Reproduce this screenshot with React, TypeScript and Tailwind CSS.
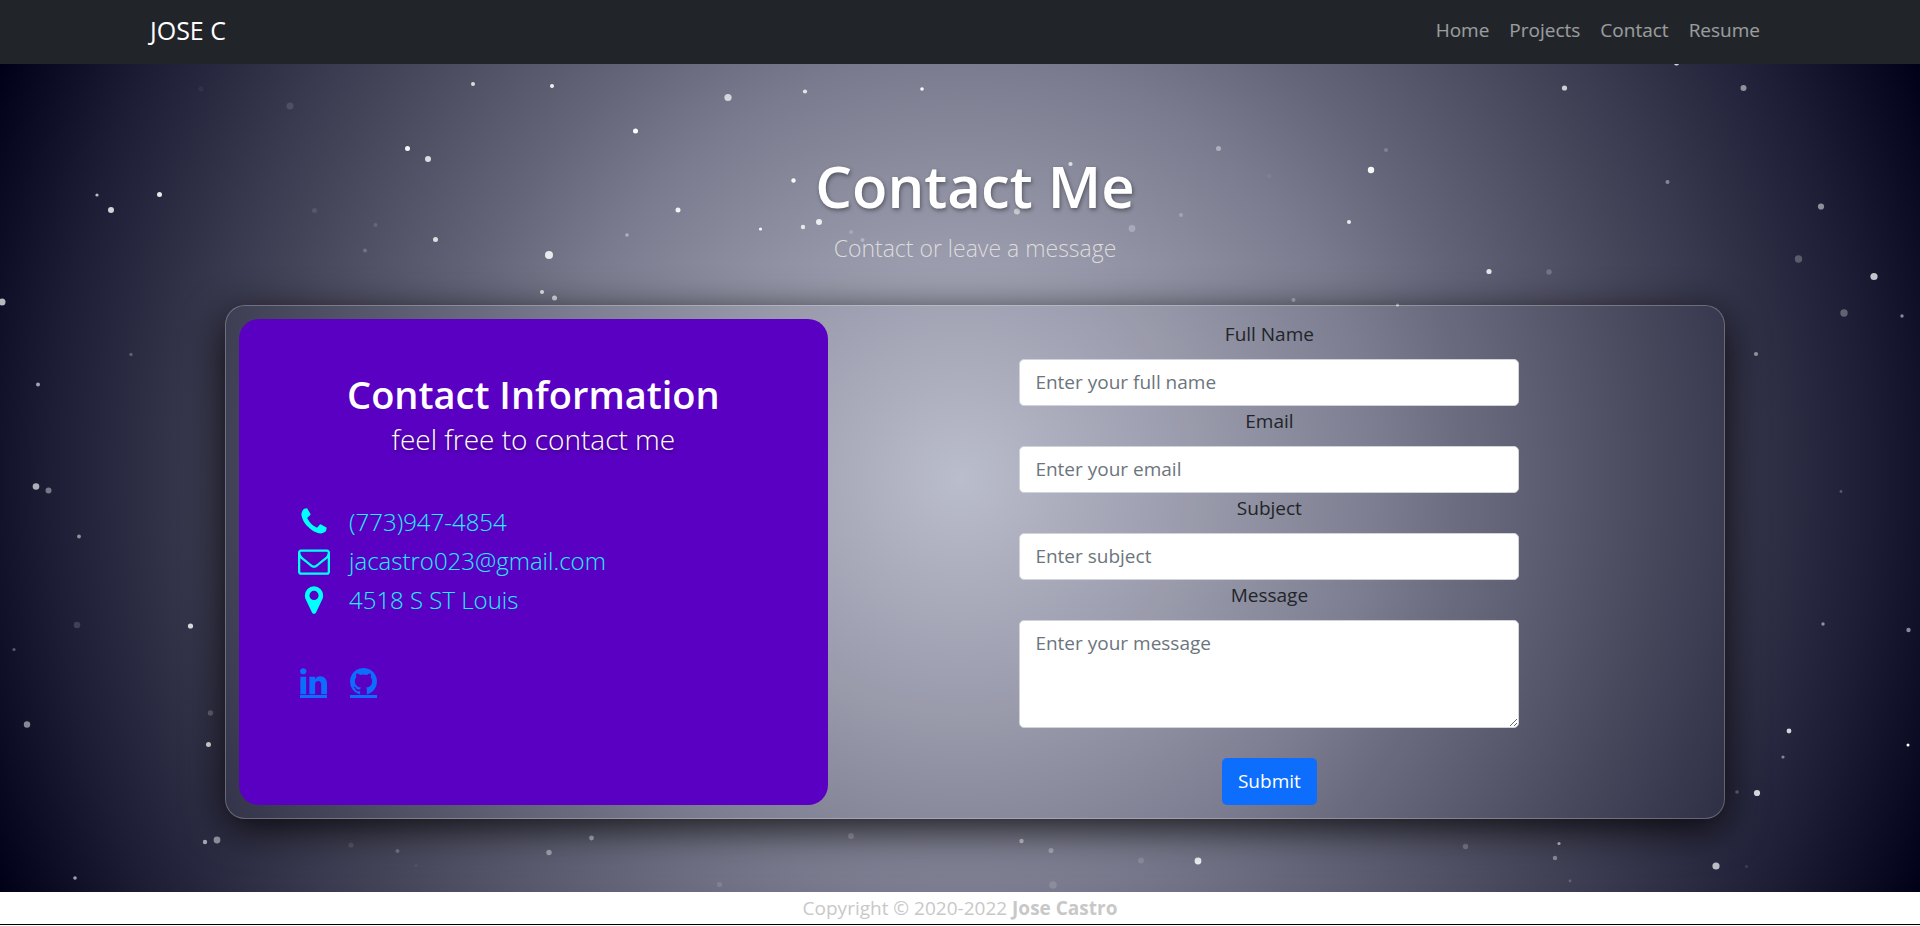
import React from "react";

type Star = [x: number, y: number, radius: number, opacity: number];

const stars: Star[] = [
  [473, 20, 2, 0.8], [552, 22, 2, 0.9], [201, 25, 2.5, 0.05], [290, 42, 3.5, 0.12], [635.5, 67, 2.5, 1],
  [407.5, 84.5, 2.5, 0.95], [428, 95, 3, 0.8], [97, 131, 1.6, 0.7], [159.5, 130.5, 2.5, 0.9], [111, 146, 3, 0.8],
  [314.5, 146.5, 2.5, 0.1], [375.5, 161, 2, 0.13], [435.5, 175.5, 2.5, 0.8], [365, 186.5, 2, 0.2], [627, 171, 1.8, 0.4],
  [549, 191, 4, 0.85], [542, 228, 2, 0.85], [554.5, 234, 2.5, 0.8], [2, 238, 3.5, 0.7],
  [728, 33.5, 3.6, 0.7], [805, 27.5, 2.1, 0.8], [922, 25, 1.8, 0.95], [793.5, 116.5, 2.2, 0.95], [678, 146, 2.5, 0.9],
  [760.5, 165, 1.6, 0.95], [803, 163, 2.2, 0.8], [819, 158, 3, 0.85], [851, 168, 2, 0.2], [862.5, 176, 2, 0.3],
  [1070.5, 100, 2.1, 0.7], [1017, 147.5, 3, 0.5], [1132, 164.5, 3.4, 0.25], [1181, 151, 2, 0.25], [1218.5, 84.5, 2.5, 0.4],
  [1269, 112, 2.5, 0.05],
  [1676.5, -1, 2.5, 0.8], [1564.5, 24, 2.6, 0.75], [1743.5, 24, 3, 0.5], [1386, 86, 2, 0.2], [1371, 106, 3.2, 0.95],
  [1349, 158, 2, 0.85], [1667.5, 118, 2, 0.4], [1821, 142.5, 3.1, 0.5], [1489, 207.5, 2.6, 0.85], [1549, 208, 2.7, 0.2],
  [1798.5, 195, 3.7, 0.25], [1874, 212.5, 3.6, 0.75], [1293.5, 236, 2, 0.4], [1397.5, 241, 1.6, 0.6],
  [131, 290.5, 1.7, 0.25], [38, 320.5, 2, 0.6], [36, 422.5, 3.3, 0.65], [48.5, 426.5, 3, 0.4], [79, 472.5, 1.9, 0.5],
  [1844, 249, 3.7, 0.3], [1902, 252, 1.7, 0.5], [1756, 290, 2.1, 0.5], [1841, 427.5, 1.4, 0.25],
  [77, 561, 3.3, 0.15], [190.5, 562, 2.6, 0.85], [14, 585.5, 1.6, 0.3], [27, 660.5, 3.2, 0.5], [210.5, 649, 2.7, 0.25],
  [208.5, 680.5, 2.5, 0.9], [205, 778, 2.2, 0.6], [217, 776, 3.4, 0.5], [351, 781, 2.6, 0.12], [397.5, 787, 2, 0.25],
  [416, 801.5, 1.6, 0.06], [549, 788.5, 2.7, 0.45], [591.5, 774, 2.4, 0.6], [75, 814, 1.8, 0.6],
  [851, 772, 2.9, 0.3], [1021.5, 777, 2.2, 0.65], [1051, 786.5, 2.5, 0.35], [1141, 796.5, 3, 0.15], [1198, 797, 3.4, 0.9],
  [719.5, 820.5, 2.6, 0.12], [1053, 821, 3.8, 0.13],
  [1823, 560, 1.7, 0.5], [1908.5, 566, 2.2, 0.5], [1789, 667, 2.4, 0.8], [1908, 681, 1.5, 1], [1783, 693, 1.6, 0.45],
  [1737, 728, 1.8, 0.3], [1757, 729, 3.1, 0.85], [1465.5, 782.5, 2.7, 0.25], [1559, 779.5, 1.6, 0.7], [1555, 794, 2.2, 0.4],
  [1570, 817, 1.4, 0.2], [1716, 802, 3.6, 0.7], [1746.5, 802.5, 1.6, 0.12],
];

const phonePath =
  "M1600 1240q0 27-10 70.5t-21 68.5q-21 50-122 106-94 51-186 51-27 0-53-3.5t-57.5-12.5-47-14.5-55.5-20.5-49-18q-98-35-175-83-127-79-264-216t-216-264q-48-77-83-175-3-9-18-49t-20.5-55.5-14.5-47-12.5-57.5-3.5-53q0-92 51-186 56-101 106-122 25-11 68.5-21t70.5-10q14 0 21 3 18 6 53 76 11 19 30 54t35 63.5 31 53.5q3 4 17.5 25t21.5 35.5 7 28.5q0 20-28.5 50t-62 55-62 53-28.5 46q0 9 5 22.5t8.5 20.5 14 24 11.5 19q76 137 174 235t235 174q2 1 19 11.5t24 14 20.5 8.5 22.5 5q18 0 46-28.5t53-62 55-62 50-28.5q14 0 28.5 7t35.5 21.5 25 17.5q25 15 53.5 31t63.5 35 54 30q70 35 76 53 3 7 3 21z";
const envelopePath =
  "M1664 1504v-768q-32 36-69 66-268 206-426 338-51 43-83 67t-86.5 48.5-102.5 24.5h-2q-48 0-102.5-24.5t-86.5-48.5-83-67q-158-132-426-338-37-30-69-66v768q0 13 9.5 22.5t22.5 9.5h1472q13 0 22.5-9.5t9.5-22.5zm0-1051v-24.5l-.5-13-3-12.5-5.5-9-9-7.5-14-2.5h-1472q-13 0-22.5 9.5t-9.5 22.5q0 168 147 284 193 152 401 317 6 5 35 29.5t46 37.5 44.5 31.5 50.5 27.5 43 9h2q20 0 43-9t50.5-27.5 44.5-31.5 46-37.5 35-29.5q208-165 401-317 54-43 100.5-115.5t46.5-131.5zm128-37v1088q0 66-47 113t-113 47h-1472q-66 0-113-47t-47-113v-1088q0-66 47-113t113-47h1472q66 0 113 47t47 113z";
const markerPath =
  "M1152 640q0-106-75-181t-181-75-181 75-75 181 75 181 181 75 181-75 75-181zm256 0q0 109-33 179l-364 774q-16 33-47.5 52t-67.5 19-67.5-19-46.5-52l-365-774q-33-70-33-179 0-212 150-362t362-150 362 150 150 362z";
const linkedinPath =
  "M477 625v991h-330v-991h330zm21-306q1 73-50.5 122t-135.5 49h-2q-82 0-132-49t-50-122q0-74 51.5-122.5t134.5-48.5 133 48.5 51 122.5zm1166 729v568h-329v-530q0-105-40.5-164.5t-126.5-59.5q-63 0-105.5 34.5t-63.5 85.5q-11 30-11 81v553h-329q2-399 2-647t-1-296l-1-48h329v144h-2q20-32 41-56t56.5-52 87-43.5 114.5-15.5q171 0 275 113.5t104 332.5z";
const githubPath =
  "M896 128q209 0 385.5 103t279.5 279.5 103 385.5q0 251-146.5 451.5t-378.5 277.5q-27 5-40-7t-13-30q0-3 .5-76.5t.5-134.5q0-97-52-142 57-6 102.5-18t94-39 81-66.5 53-105 20.5-150.5q0-119-79-206 37-91-8-204-28-9-81 11t-92 44l-38 24q-93-26-192-26t-192 26q-16-11-42.5-27t-83.5-38.5-85-13.5q-45 113-8 204-79 87-79 206 0 85 20.5 150t52.5 105 80.5 67 94 39 102.5 18q-39 36-49 103-21 10-45 15t-57 5-65.5-21.5-55.5-62.5q-19-32-48.5-52t-49.5-24l-20-3q-21 0-29 4.5t-5 11.5 9 14 13 12l7 5q22 10 43.5 38t31.5 51l10 23q13 38 44 61.5t67 30 69.5 7 55.5-3.5l23-4q0 38 .5 88.5t.5 54.5q0 18-13 30t-40 7q-232-77-378.5-277.5t-146.5-451.5q0-209 103-385.5t279.5-279.5 385.5-103z";

const navLinks = ["Home", "Projects", "Contact", "Resume"];

const contactRows = [
  { icon: phonePath, text: "(773)947-4854" },
  { icon: envelopePath, text: "jacastro023@gmail.com" },
  { icon: markerPath, text: "4518 S ST Louis" },
];

const socialLinks = [
  { icon: linkedinPath, name: "LinkedIn" },
  { icon: githubPath, name: "GitHub" },
];

const fields = [
  { id: "name", label: "Full Name", placeholder: "Enter your full name", type: "text" },
  { id: "email", label: "Email", placeholder: "Enter your email", type: "email" },
  { id: "subject", label: "Subject", placeholder: "Enter subject", type: "text" },
];

const controlClass =
  "block w-full rounded-[5px] border border-[#ced4da] bg-white px-[15px] py-2 text-[19px] leading-[29px] text-[#212529] placeholder:text-[#6c757d] placeholder:opacity-100";

function Navbar() {
  return (
    <nav className="bg-[#212529]">
      <div className="mx-auto flex h-16 max-w-[1650px] items-center justify-between px-[15px] pb-1">
        <a href="#home" className="text-[25px] leading-9 text-white">
          JOSE C
        </a>
        <ul className="flex">
          {navLinks.map((link) => (
            <li key={link}>
              <a href={`#${link.toLowerCase()}`} className="px-[10px] text-[19px] leading-[30px] text-white/55">
                {link}
              </a>
            </li>
          ))}
        </ul>
      </div>
    </nav>
  );
}

function Starfield() {
  return (
    <svg
      aria-hidden="true"
      viewBox="0 0 1920 829"
      preserveAspectRatio="xMidYMin slice"
      className="absolute inset-0 h-full w-full"
    >
      {stars.map(([x, y, radius, opacity]) => (
        <circle key={`${x}-${y}`} cx={x} cy={y} r={radius} fill="#fff" fillOpacity={opacity} />
      ))}
    </svg>
  );
}

function ContactInfo() {
  return (
    <div className="w-2/5 rounded-[20px] bg-[#5a00c2] px-[59px] pt-[51px] pb-[60px]">
      <h2 className="text-center text-[38px] leading-[48px] font-semibold text-white">Contact Information</h2>
      <p className="text-center text-[28px] leading-[42px] font-light text-white [text-shadow:1px_2px_4px_rgba(0,0,0,0.4)]">
        feel free to contact me
      </p>
      <ul className="mt-[42px]">
        {contactRows.map((row) => (
          <li key={row.text} className="flex h-[39px] items-center gap-[19px] text-[24px] font-light text-[#1ff0ff]">
            <svg aria-hidden="true" viewBox="0 0 1792 1792" className="h-8 w-8 shrink-0 fill-[#00ffff]">
              <path d={row.icon} />
            </svg>
            <span>{row.text}</span>
          </li>
        ))}
      </ul>
      <div className="mt-[49px] flex gap-[23px] pl-[2px]">
        {socialLinks.map((link) => (
          <a
            key={link.name}
            href={`#${link.name.toLowerCase()}`}
            aria-label={link.name}
            className="border-b-[3px] border-[#0d6efd]"
          >
            <svg aria-hidden="true" viewBox="128 128 1536 1536" className="h-[27px] w-[27px] fill-[#0d6efd]">
              <path d={link.icon} />
            </svg>
          </a>
        ))}
      </div>
    </div>
  );
}

function ContactForm() {
  return (
    <form className="flex w-3/5 flex-col items-center text-[19px] text-[#212529]" onSubmit={(e) => e.preventDefault()}>
      <div className="w-full max-w-[500px] text-center">
        {fields.map((field) => (
          <div key={field.id}>
            <label htmlFor={field.id} className="mb-[10px] block leading-[30px]">
              {field.label}
            </label>
            <input id={field.id} type={field.type} placeholder={field.placeholder} className={controlClass} />
          </div>
        ))}
        <label htmlFor="message" className="mb-[10px] block leading-[30px]">
          Message
        </label>
        <textarea id="message" rows={3} placeholder="Enter your message" className={`${controlClass} h-[108px]`} />
      </div>
      <button
        type="submit"
        className="mt-[30px] rounded-[5px] bg-[#0d6efd] px-4 py-2 text-[19px] leading-[31px] text-white"
      >
        Submit
      </button>
    </form>
  );
}

export default function App() {
  return (
    <div className="border-b border-black bg-white font-['Open_Sans','Noto_Sans',sans-serif]">
      <Navbar />
      <main className="relative overflow-hidden bg-[radial-gradient(circle_at_center,#b9bccb_0%,#9c9dae_20%,#7a7b8e_40%,#646579_50%,#444459_67%,#2e2e45_78%,#1d1d36_87%,#000018_100%)] pt-[84px] pb-[73px] pl-[30px]">
        <Starfield />
        <div className="relative mx-auto max-w-[1500px]">
          <h1 className="text-center text-[58px] leading-[76px] font-semibold text-white [text-shadow:1px_2px_4px_rgba(0,0,0,0.4)]">
            Contact Me
          </h1>
          <p className="mb-[38px] pt-[5px] text-center text-[23px] leading-[38px] font-light text-[#dcdcdc]">
            Contact or leave a message
          </p>
          <section className="flex rounded-[20px] border border-white/25 bg-white/2 p-[13px] shadow-[0_10px_40px_rgba(0,0,0,0.85)]">
            <ContactInfo />
            <ContactForm />
          </section>
        </div>
      </main>
      <footer className="h-8 text-center text-[19px] leading-8 text-[#c8c8c8]">
        Copyright © 2020-2022 <strong className="font-bold">Jose Castro</strong>
      </footer>
    </div>
  );
}
